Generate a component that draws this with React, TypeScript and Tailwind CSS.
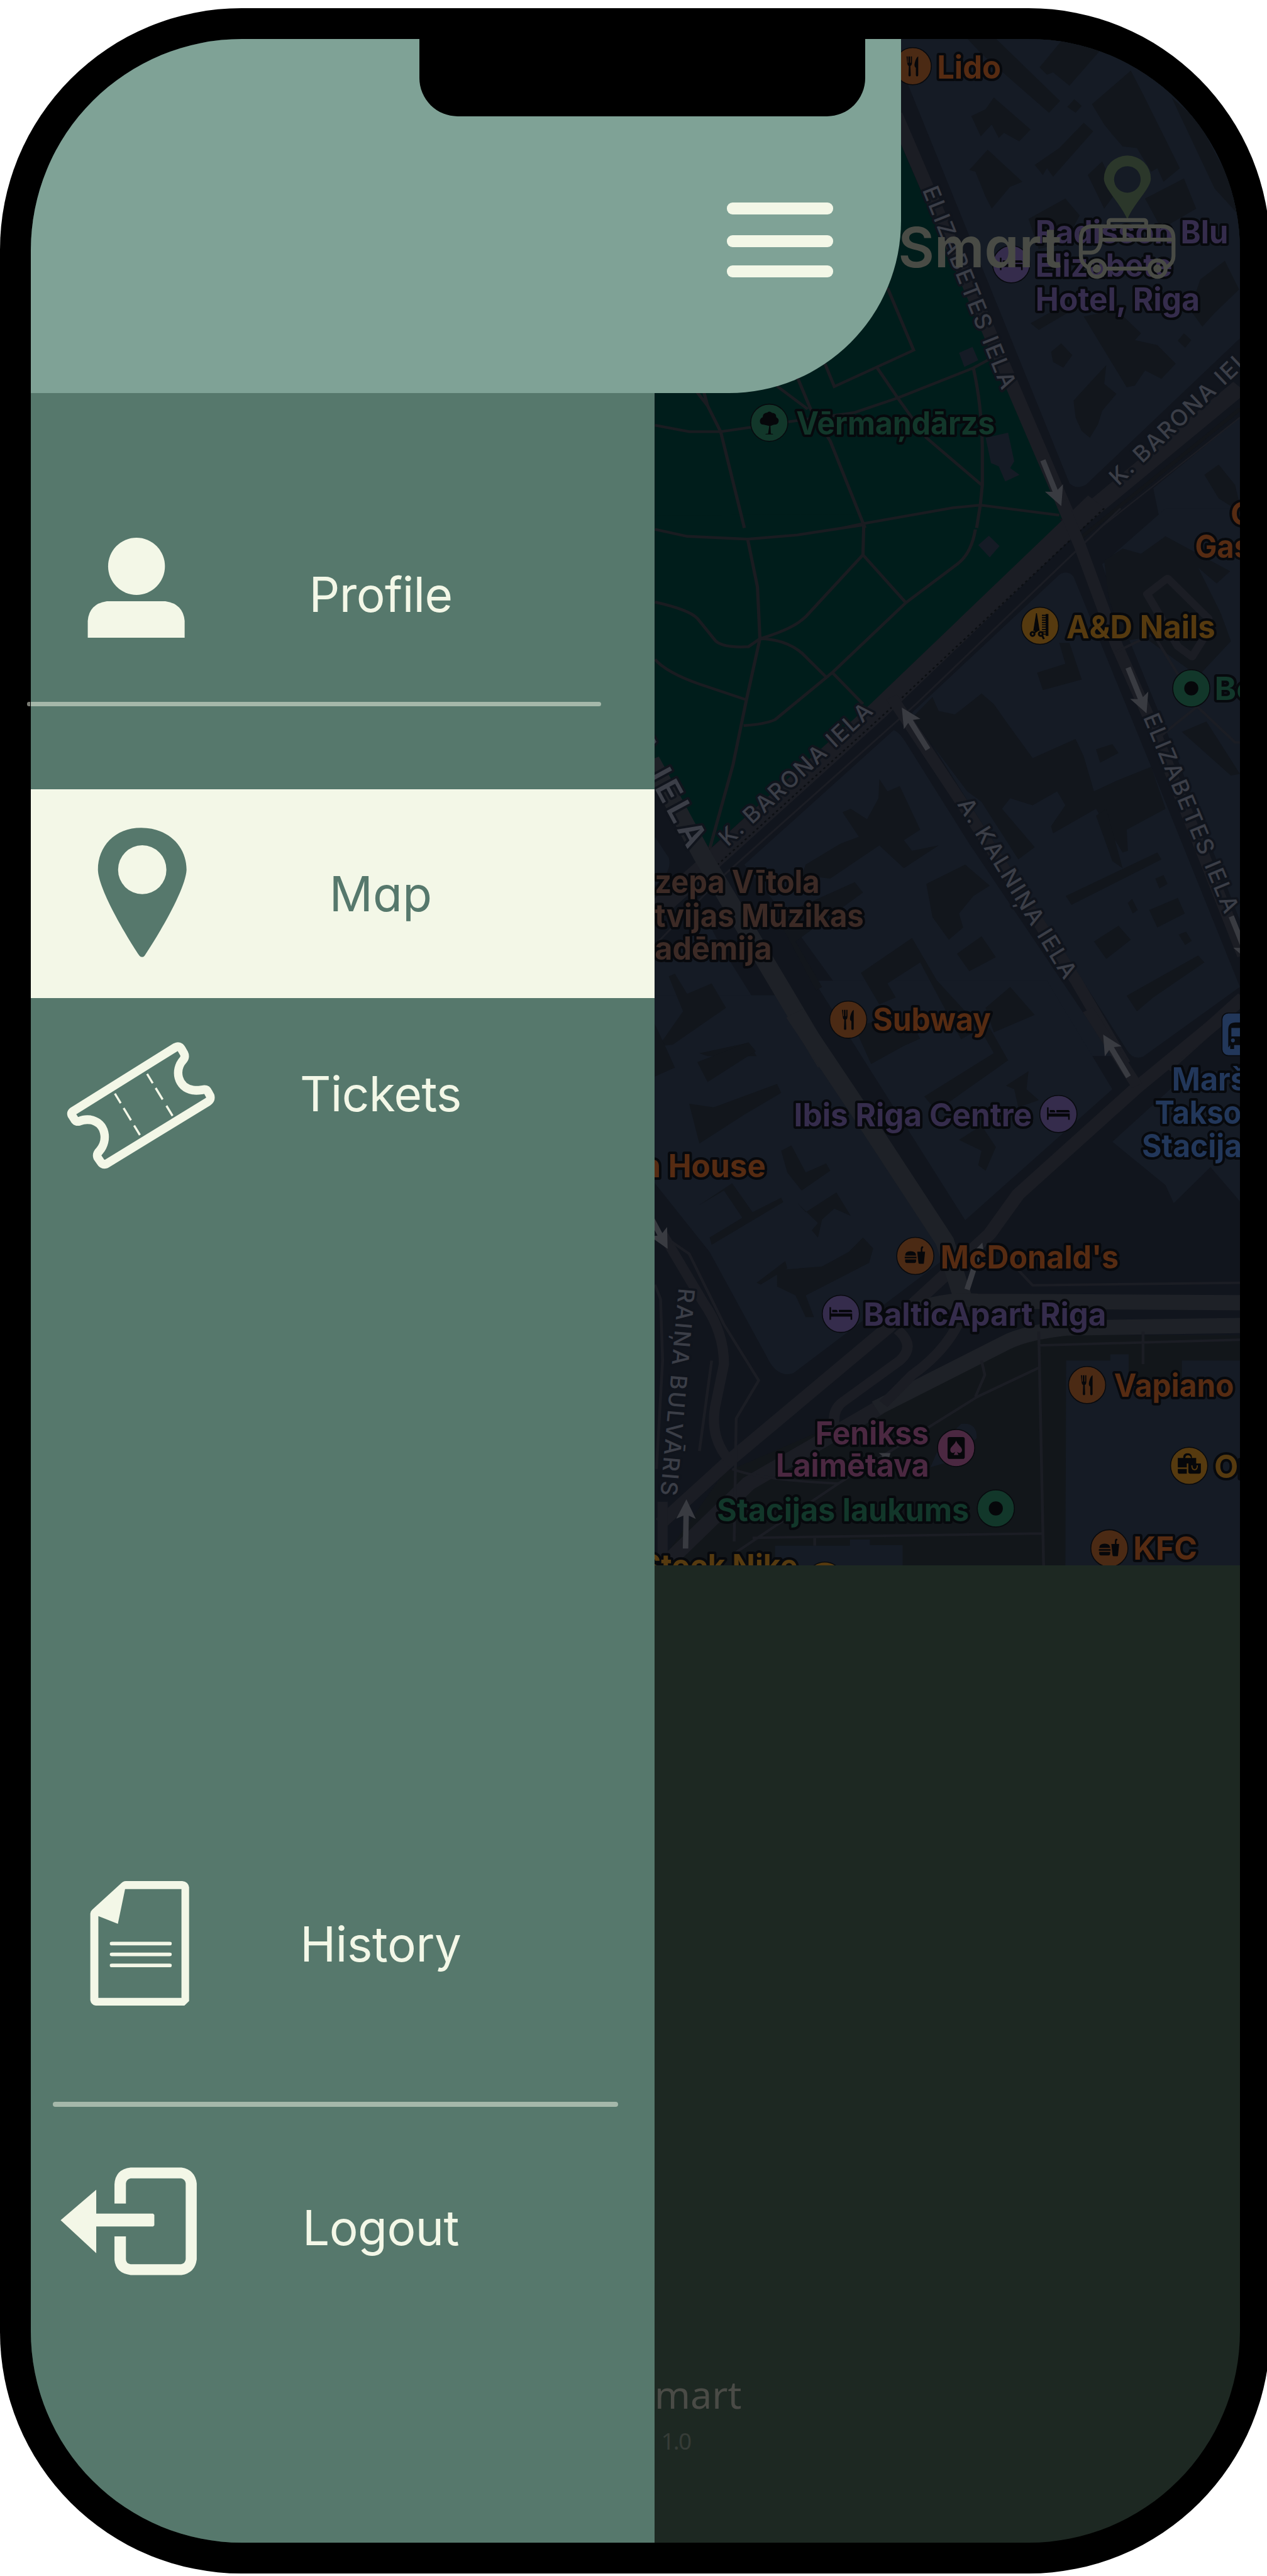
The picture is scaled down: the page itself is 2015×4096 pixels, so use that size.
import type { ReactNode } from 'react'

const ORANGE = '#4b2a14'
const ORANGE_TEXT = '#562b12'
const PURPLE = '#352c4c'
const GREEN = '#12372a'
const YELLOW = '#563a0f'
const PINK = '#4b2841'
const BLUE = '#22375a'
const BLOCK = '#151b25'
const BUILDING = '#12161c'
const ROAD = '#1b1d24'

const NORTH = 'translate(1600 0) scale(1.0459 .861)'
const MIDDLE = 'translate(1600 1300) scale(1.0459 .8929)'
const SOUTH = 'translate(1600 2600) scale(1.0459 .9247)'

type LabelProps = { x: number; y: number; w: number; fill: string; size?: number; children: string }

function Label({ x, y, w, fill, size = 81, children }: LabelProps) {
  return (
    <text
      x={x}
      y={y}
      textLength={w}
      lengthAdjust="spacingAndGlyphs"
      fontSize={size}
      fill={fill}
      className="font-[650] [paint-order:stroke]"
      stroke="#07090d"
      strokeWidth={13}
      strokeLinejoin="round"
    >
      {children}
    </text>
  )
}

type StreetProps = { x: number; y: number; angle: number; w: number; size?: number; bold?: boolean; children: string }

function Street({ x, y, angle, w, size = 58, bold, children }: StreetProps) {
  return (
    <text
      transform={`translate(${x} ${y}) rotate(${angle})`}
      textLength={w}
      fontSize={size}
      fill="#3b3e47"
      className={bold ? 'font-semibold [paint-order:stroke]' : 'font-medium [paint-order:stroke]'}
      stroke="#10141c"
      strokeWidth={12}
      strokeLinejoin="round"
    >
      {children}
    </text>
  )
}

function Poi({ x, y, fill, children }: { x: number; y: number; fill: string; children: ReactNode }) {
  return (
    <g transform={`translate(${x} ${y})`}>
      <circle r="47.5" fill={fill} stroke="#080a0e" strokeWidth="2.5" />
      {children}
    </g>
  )
}

const Fork = () => (
  <g fill="#06070a">
    <path d="M-16 -25h3v16h2v-16h4v16h2v-16h3v18q0 5-4 7l1 23q0 3-3 3t-3-3l1-23q-4-2-4-7z" />
    <path d="M14-25V23q0 3-3 3t-3-3V4Q3 2 5-8 8-22 14-25Z" />
  </g>
)

const Bed = () => (
  <path d="M-29-17h4V-1H29V15H25V7H-25V15H-29ZM-22-10h10q4 0 4 6h-14ZM-5-10H25q4 0 4 6H-5Z" fill="#06070a" />
)

const Burger = () => (
  <g fill="#06070a">
    <path d="M-26-1q0-11 14-11T2-1ZM-27 2H3v4H-27ZM-26 9H2v5q0 4-4 4h-20q-4 0-4-4Z" />
    <path d="M5-11h9v-8q0-5 4-6l3 2-3 5v7h7l-3 29q0 2-2 2H11q-3 0-3-3Z" />
  </g>
)

const Tree = () => (
  <path d="M-3 28 0 8-14 5q-10 0-10-9 0-7 7-10 0-11 12-12 6-5 12 1 11 0 11 11 7 4 6 10-1 9-12 9L3 8l1 20q6 0 6 2h-20q0-2 7-2Z" fill="#06070a" />
)

const Scissors = () => (
  <g fill="none" stroke="#06070a" strokeWidth="5">
    <path d="M-9-32-16 12-2 12Z" fill="#06070a" strokeWidth="2" />
    <circle cx="-19" cy="21" r="5" />
    <circle cx="2" cy="21" r="5" />
    <path d="M-14 17-4 10M6 26 10 34" />
    <path d="M18-30V26" strokeWidth="7" />
    <path d="M10-28v52" strokeWidth="10" strokeDasharray="3 3" />
  </g>
)

const Dot = () => <circle r="18" fill="#06070a" />

const Card = () => (
  <>
    <rect x="-22" y="-28" width="44" height="56" rx="5" fill="#06070a" />
    <path d="M0-19C3-8 16-3 15 6 14 14 5 14 2 9L6 18H-6L-2 9C-5 14-14 14-15 6-16-3-3-8 0-19Z" fill={PINK} />
  </>
)

const Bags = () => (
  <>
    <path d="M-29-20h14v-4q2-8 11-8t11 8v4H18v14H-6V4H-29ZM-10-20H5q-2-7-8-7-6 0-7 7ZM-29 8H-6V20H-26q-3 0-3-4Z" fill="#06070a" />
    <path d="M-2-6H30V16q0 4-4 4H2q-4 0-4-4Z" fill="#06070a" />
    <path d="M7-1q0 11 7 11t7-11" fill="none" stroke={YELLOW} strokeWidth="3" />
  </>
)

function Arrow({ x, y, angle, len = 126 }: { x: number; y: number; angle: number; len?: number }) {
  return (
    <path
      transform={`translate(${x} ${y}) rotate(${angle})`}
      d={`M0 0-50-25-42-7H${-len}V7H-42L-50 25Z`}
      fill="#393b41"
    />
  )
}

function Blocks() {
  return (
    <g fill={BLOCK}>
      <g transform={NORTH}>
        <path d="M673 110H1502V1005L1125 1440Q1100 1455 1085 1435L673 200Z" />
        <path d="M1502 1240V1568H1310L1290 1450Z" />
      </g>
      <g transform={MIDDLE}>
        <path d="M700 585 1060 190Q1080 175 1095 195L1285 740 1502 1370 1265 1570Q1240 1580 1225 1550L870 900Z" />
        <path d="M1320 0H1502V1180L1330 660 1215 330 1165 160Z" />
        <path d="M655 635Q670 640 690 680L840 960 1190 1568H640L400 1180 290 1020Z" />
        <path d="M71 1290 200 1180 230 1250 400 1568H71ZM71 940 105 1000Q115 1040 71 1080Z" />
      </g>
      <g transform={SOUTH}>
        <path d="M460-100 830 562 1190 200 1030-100Z" />
        <path d="M71-60H390L790 660 410 985Q370 1000 345 940L205 650 71 460Z" />
        <path d="M1190 345 1380 150H1502V510L1430 415 1340 515 1320 465Z" />
        <path d="M610 1080 1010 880H1502V1530H71L240 1260Z" fill="#12161a" />
        <path d="M1077 950H1185V933H1230V1000H1360V950H1502V1530H1075ZM365 1462H548V1445H597V1460H677V1530H365Z" />
        <path d="M745 1245 770 1180 820 1125Q860 1120 858 1165L790 1230Z" />
      </g>
    </g>
  )
}

function Buildings() {
  return (
    <g fill={BUILDING}>
      <g transform={NORTH}>
        <path d="M835 115H905L1062 300 1035 335 870 160ZM1012 200 1070 115H1150L1160 150 1085 255 1045 215 1030 222ZM1097 295 1115 315 1100 335 1080 318ZM845 345 880 325 900 290 990 385 962 420 925 395 912 410 895 370 868 405ZM885 445 970 540 940 555 895 620 880 585 855 510 840 505ZM1120 365 1143 390 1045 525 1030 500 1020 520 1000 490 1060 440Z" />
        <path d="M1140 310 1235 210 1265 280 1355 500 1315 540 1300 500 1285 510 1250 440 1215 435 1190 400 1170 370ZM1270 590 1365 530 1395 620 1310 680ZM1130 520 1165 480 1200 570 1170 620ZM985 650 1075 590 1110 640 1075 720 1010 740ZM1335 290 1400 360 1470 520 1500 640 1440 560Z" />
        <path d="M1120 940 1200 920 1260 990 1245 1010 1300 1025 1345 1080 1310 1125 1270 1100 1245 1145 1225 1150ZM990 960 1080 900 1100 915 1010 980ZM1040 1045 1065 1020 1092 1055 1070 1092 1045 1075ZM1095 1190 1140 1130 1175 1085 1170 1140 1200 1170 1165 1220 1155 1260 1135 1300 1115 1280 1100 1240ZM1405 830 1465 775 1500 860 1440 930 1410 970 1380 920ZM1365 990 1383 1010 1368 1033 1350 1012ZM1415 1410 1450 1380 1490 1440 1502 1500V1520L1450 1480Z" />
      </g>
      <g transform={MIDDLE}>
        <path d="M750 540 765 580 805 590 870 530 900 560 930 610 995 715 1100 660 1120 710 1145 810 1200 780 1285 740 1320 860 1225 920 1228 980 1215 985 1150 860 1045 930 1040 910 1075 850 1055 810 995 850 940 830 920 860 1000 970 960 1005 870 840 835 810 700 600Z" />
        <path d="M1006 470 1075 445 1060 385 1085 385 1115 490 1020 520ZM1076 1110 1300 985 1310 1005 1090 1135ZM1190 1010 1150 880 1175 860 1215 1030ZM1280 1150 1350 1115 1367 1160 1300 1200ZM1145 1240 1205 1195 1235 1235 1175 1290ZM1225 1395 1400 1280 1415 1300 1290 1400 1250 1440ZM1295 1060 1315 1050 1325 1075 1305 1088ZM1150 690 1190 675 1205 700 1160 728ZM1228 1130 1238 1118 1252 1150 1240 1160ZM1352 1220 1370 1212 1384 1238 1368 1250Z" />
        <path d="M1170 150 1215 115 1260 130 1320 80 1478 180 1445 215 1400 170 1455 300 1480 380 1400 480 1340 430 1270 370 1215 380 1180 250ZM1360 640 1420 610 1502 760 1480 765Z" />
        <path d="M530 870 550 860 590 890 618 830 620 775 640 810 670 795 720 920 680 950 700 980 765 965 680 1030 620 965 500 1060 430 1050 440 1020 525 960 570 940ZM735 1075 830 1020 890 1080 850 1110 815 1160 825 1200 790 1235 750 1170ZM575 1330 700 1230 760 1350 830 1440 850 1500 820 1520 720 1300 640 1360 660 1400 620 1420ZM810 1275 870 1225 905 1285 840 1325ZM880 1430 940 1370 1000 1450 900 1500ZM370 1170 560 1070 580 1100 415 1240 480 1370 465 1380Z" />
        <path d="M105 1340 120 1332 150 1390 210 1360 245 1430 115 1535 80 1540 140 1440ZM180 1560 300 1530 320 1568H200Z" />
      </g>
      <g transform={SOUTH}>
        <path d="M730 220 900 100 870 40 890 30 935 120 760 260ZM600 130 680 80 720 60 700 20 640 0 560 30ZM930 190 985 150 980 200 1010 230 960 250 950 200ZM815 340 870 300 905 360 880 425 862 410 870 370Z" />
        <path d="M175 125 300 70 318 95 200 180ZM155 240 215 250 370 185 380 210 290 270 180 350ZM71 20 100 90 120 140 71 165ZM380 370 405 355 440 430 490 405 500 425 430 480 395 430ZM180 520 260 460 310 540 380 500 385 512 210 630 205 610 285 555 240 480ZM420 515 440 540 515 485 550 550 510 530 480 560 470 610 455 590 470 570ZM370 700 480 690 545 650 580 610 605 640 595 680 440 770 460 830 440 830 415 770 370 745ZM320 735 390 675 395 695 330 740Z" />
      </g>
    </g>
  )
}

function Park() {
  return (
    <>
      <g fill="#001d1b">
        <path transform={NORTH} d="M71 400 673 430 1070 1540H71Z" />
        <path transform={MIDDLE} d="M71 20 1050 15 1068 40 600 560 205 975 71 720Z" />
      </g>
      <g fill={BLOCK}>
        <path
          transform={NORTH}
          d="M815 1048 848 1030 862 1070 828 1090ZM880 1300 935 1285 950 1370 940 1390 963 1410 928 1430 912 1385 893 1375Z"
        />
        <path transform={MIDDLE} d="M862 105 888 78 914 108 890 140Z" />
      </g>
      <g fill="none" stroke="#1a1c21" strokeWidth="8">
        <g transform={NORTH}>
          <path d="M640 855 704 1040 510 1148 487 1080M71 1263 155 1282H232L415 1250 560 1225 665 1182 850 1093 888 1068M420 1122 452 1215 500 1310 585 1568M370 1147 445 1215M175 1166 200 1205 232 1282 290 1568M190 1160 200 1205M615 1093 665 1182 735 1300 870 1440M850 1093Q870 1200 872 1330V1440L867 1500 858 1568M530 1568 580 1555 800 1508 867 1500 1060 1530" />
        </g>
        <g transform={MIDDLE}>
          <path d="M71 60 150 80 298 88 420 76 582 47M298 88 322 225 328 373 295 548 262 735 205 975M582 47 580 133 440 310Q410 345 328 373L300 396Q240 400 220 380L175 315Q155 290 71 268M580 133 685 270M855 60Q845 130 810 160L685 270 505 470 365 605Q340 618 288 622M328 373Q400 375 440 425L490 483M505 470 580 560M71 432Q100 470 180 503L295 548" />
        </g>
      </g>
    </>
  )
}

function Roads() {
  return (
    <g fill="none" stroke={ROAD} strokeLinejoin="round">
      <g transform={NORTH}>
        <path d="M660 340 1085 1540" strokeWidth="34" />
        <path d="M1502 1150 1085 1568" strokeWidth="46" />
        <path d="M1502 1215 1110 1600" strokeWidth="10" stroke="#12151a" />
        <path d="M1502 1240 1160 1568" strokeWidth="4" />
      </g>
      <g transform={MIDDLE}>
        <path d="M1150-20 620 575 200 1020 60 1165" strokeWidth="52" />
        <path d="M1170 0 650 570 215 1030" strokeWidth="4" stroke="#0c0f13" strokeDasharray="6 8" />
        <path d="M1210 0 710 560 240 1050 71 1250" strokeWidth="5" />
        <path d="M1065-20 1110 105 1200 390 1280 600 1510 1280" strokeWidth="30" />
        <path d="M650 540 820 840 1100 1350 1220 1590" strokeWidth="30" />
        <path d="M60 720 190 1000 490 1590" strokeWidth="46" stroke="#1e2127" />
        <path d="M1510 1400 1320 1600" strokeWidth="34" />
        <path d="M1275 245 1325 200 1425 315 1425 350 1385 425 1350 395Z" strokeWidth="20" />
        <path d="M1200 410 1290 360 1400 570 1490 670 1502 670M1400 565 1310 650" strokeWidth="7" />
      </g>
      <g transform={SOUTH}>
        <path d="M1460 0 1250 195 960 490 890 600 640 860 260 1220 85 1400" strokeWidth="34" />
        <path d="M90 1520 300 1290 620 1080" strokeWidth="40" />
        <path d="M1130-20 1250 190" strokeWidth="28" />
        <path d="M412-10 560 240 780 620 825 780" strokeWidth="46" stroke="#1e2127" />
        <path d="M720 805Q790 780 860 786L1510 790M612 1082 930 900Q980 872 1080 860L1510 853" strokeWidth="42" stroke="#1e2127" />
        <path d="M665 865Q710 910 670 950L530 1065Q505 1085 510 1130M830 800Q800 910 700 990L630 1070" strokeWidth="26" />
        <path d="M90 600 190 790Q240 870 240 960L218 1080Q205 1170 260 1235M90 1340V1500" strokeWidth="25" />
        <path d="M71 740 85 780 90 950 75 1250M110 620 155 655 240 850 325 1005 270 1110 265 1450M210 950 180 1200M1010 870 1022 1530M1010 908 1510 892M1265 870V960M960 700 995 742 1510 735M1010 970 860 1050 520 1290 270 1480M310 1440 1020 1428M260 1250Q330 1280 520 1290M870 950 878 990 855 1050M462 1440V1462" strokeWidth="7" />
      </g>
    </g>
  )
}

function Brand() {
  return (
    <g>
      <text
        x="2297"
        y="683"
        textLength="418"
        lengthAdjust="spacingAndGlyphs"
        fontSize="142"
        fill="#494b45"
        className="font-semibold [font-feature-settings:'cv11']"
      >
        Smart
      </text>
      <path
        d="M2883 561C2865 520 2823 482 2823 457A60 59 0 0 1 2943 457C2943 482 2900 520 2883 561ZM2883 425A34 34 0 1 0 2883 493A34 34 0 1 0 2883 425Z"
        fill="#2b372a"
        fillRule="evenodd"
      />
      <g fill="none" stroke="#494b45" strokeWidth="10">
        <path d="M2782 684Q2764 672 2764 655V611Q2764 579 2794 579H2971Q3001 579 3001 611V655Q3001 672 2983 684M2830 687H2935" />
        <path d="M2835 576V567Q2836 563 2841 563H2925Q2930 563 2931 567V576M2817 613H3000M2876 579V613M2938 579V613M2815 579V612Q2813 645 2790 646H2766" />
        <circle cx="2805" cy="687" r="21" />
        <circle cx="2960" cy="687" r="21" />
      </g>
      <circle cx="2805" cy="687" r="10.500" fill="#494b45" />
      <circle cx="2960" cy="687" r="10.500" fill="#494b45" />
    </g>
  )
}

function CityMap() {
  return (
    <svg viewBox="78 100 3093 3902" className="block h-[2427px] w-full shrink-0 font-['Inter',sans-serif]" preserveAspectRatio="none">
      <rect x="78" y="100" width="3093" height="3902" fill="#11151d" />
      <Blocks />
      <Buildings />
      <Park />
      <Roads />

      <Arrow x={2714} y={1294} angle={68} />
      <Arrow x={2306} y={1809} angle={238} />
      <Arrow x={2932} y={1824} angle={68} />
      <Arrow x={2821} y={2645} angle={239} />
      <Arrow x={2512} y={3177} angle={-72} />
      <Arrow x={1707} y={3193} angle={62} />
      <Arrow x={1755} y={3833} angle={-89} />
      <Arrow x={3196} y={2460} angle={68} />
      <path d="M2247 3715H2277L2272 3732 2262 3726 2247 3740 2256 3722Z" fill="#393b41" />

      <Street x={2358} y={486} angle={68.300} w={552}>ELIZABETES IELA</Street>
      <Street x={2860} y={1244} angle={-43.500} w={508}>K. BARONA IELA</Street>
      <Street x={1861} y={2166} angle={-42.600} w={508}>K. BARONA IELA</Street>
      <Street x={1607} y={1893} angle={61.500} w={318} size={84} bold>A IELA</Street>
      <Street x={2447} y={2056} angle={58.700} w={528}>A. KALNIŅA IELA</Street>
      <Street x={2923} y={1834} angle={67.500} w={546}>ELIZABETES IELA</Street>
      <Street x={1735} y={3292} angle={95} w={532}>RAIŅA BULVĀRIS</Street>

      <Poi x={2334} y={169.500} fill={ORANGE}><Fork /></Poi>
      <Poi x={1967} y={1081} fill={GREEN}><Tree /></Poi>
      <Poi x={2586} y={676} fill={PURPLE}><Bed /></Poi>
      <Poi x={2659.500} y={1600} fill={YELLOW}><Scissors /></Poi>
      <Poi x={3046.500} y={1760} fill={GREEN}><Dot /></Poi>
      <Poi x={2169} y={2607} fill={ORANGE}><Fork /></Poi>
      <Poi x={2706.500} y={2848} fill={PURPLE}><Bed /></Poi>
      <Poi x={2340.500} y={3211} fill={ORANGE}><Burger /></Poi>
      <Poi x={2150} y={3359} fill={PURPLE}><Bed /></Poi>
      <Poi x={2780} y={3541} fill={ORANGE}><Fork /></Poi>
      <Poi x={2445} y={3702} fill={PINK}><Card /></Poi>
      <Poi x={2546.500} y={3856.500} fill={GREEN}><Dot /></Poi>
      <Poi x={3041} y={3747.500} fill={YELLOW}><Bags /></Poi>
      <Poi x={2837} y={3958.500} fill={ORANGE}><Burger /></Poi>
      <Poi x={2109} y={4041} fill={YELLOW}><Bags /></Poi>
      <g>
        <rect x="3125" y="2590" width="108" height="109" rx="16" fill={BLUE} stroke="#080a0e" strokeWidth="2.500" />
        <path d="M3141 2678V2632Q3141 2614 3160 2614H3200V2672H3156V2682H3146V2672ZM3149 2628V2650H3200V2628ZM3148 2660a5 5 0 1 0 10 0a5 5 0 1 0-10 0Z" fill="#080a0e" fillRule="evenodd" />
      </g>

      <Label x={2396} y={202} w={164} fill={ORANGE_TEXT}>Lido</Label>
      <Label x={2648} y={622} w={493} fill={PURPLE}>Radisson Blu</Label>
      <Label x={2648} y={708} w={350} fill={PURPLE}>Elizabete</Label>
      <Label x={2648} y={794} w={420} fill={PURPLE}>Hotel, Riga</Label>
      <Label x={2036} y={1112} w={508} fill={GREEN}>Vērmaņdārzs</Label>
      <Label x={3147} y={1342} w={60} fill={ORANGE_TEXT}>C</Label>
      <Label x={3056} y={1427} w={142} fill={ORANGE_TEXT}>Gas</Label>
      <Label x={2727} y={1633} w={381} fill={YELLOW}>A&D Nails</Label>
      <Label x={3106} y={1789} w={106} fill={GREEN}>Be</Label>
      <Label x={1674} y={2284} w={422} fill="#3c2a25">zepa Vītola</Label>
      <Label x={1674} y={2370} w={535} fill="#3c2a25">tvijas Mūzikas</Label>
      <Label x={1674} y={2454.500} w={300} fill="#3c2a25">adēmija</Label>
      <Label x={2232} y={2635} w={302} fill={ORANGE_TEXT}>Subway</Label>
      <Label x={2997} y={2788} w={193} fill={BLUE}>Marš</Label>
      <Label x={2953} y={2873} w={222} fill={BLUE}>Takso</Label>
      <Label x={2920} y={2958} w={256} fill={BLUE}>Stacija</Label>
      <Label x={2030} y={2880} w={609} fill={PURPLE}>Ibis Riga Centre</Label>
      <Label x={1640} y={3009.500} w={318} fill={ORANGE_TEXT}>n House</Label>
      <Label x={2405} y={3242.500} w={456} fill={ORANGE_TEXT}>McDonald's</Label>
      <Label x={2208} y={3389} w={621} fill={PURPLE}>BalticApart Riga</Label>
      <Label x={2849} y={3571} w={307} fill={ORANGE_TEXT}>Vapiano</Label>
      <Label x={2085} y={3693} w={290} fill={PINK}>Fenikss</Label>
      <Label x={1984} y={3776} w={392} fill={PINK}>Laimētava</Label>
      <Label x={3105} y={3779} w={94} fill={YELLOW}>Or</Label>
      <Label x={1833} y={3890} w={645} fill={GREEN}>Stacijas laukums</Label>
      <Label x={2898} y={3987} w={164} fill={ORANGE_TEXT}>KFC</Label>
      <Label x={1640} y={4032} w={400} fill={YELLOW}>Stock Nike</Label>

      <Brand />
    </svg>
  )
}

function IconBox({ y, scaleY, children }: { y: number; scaleY: number; children: ReactNode }) {
  return (
    <svg viewBox="0 0 300 220" className="h-[220px] w-[300px] shrink-0 overflow-visible" fill="currentColor">
      <g transform={`translate(-60 ${y}) scale(.67428 ${scaleY})`}>{children}</g>
    </svg>
  )
}

const ProfileIcon = () => (
  <IconBox y={-27.2} scaleY={0.6942}>
    <ellipse cx="322" cy="132" rx="67" ry="65.500" />
    <path d="M207 295.500V257Q210 218 252 212H390Q432 218 435.500 257V295.500Z" />
  </IconBox>
)

const PinIcon = () => (
  <IconBox y={-502.9} scaleY={0.6942}>
    <path
      fillRule="evenodd"
      d="M335.500 1028Q331 1028 329 1025C290 968 232 870 231 828 231 775 270 732 333 732 398 732 440 775 440 828 438 870 382 965 341 1025Q339 1028 335.500 1028ZM335.500 772A57 56 0 1 0 335.500 884A57 56 0 1 0 335.500 772Z"
    />
  </IconBox>
)

const TicketIcon = () => (
  <IconBox y={-821.4} scaleY={0.6942}>
    <g fill="none" stroke="currentColor" strokeLinejoin="round">
      <path
        strokeWidth="20"
        d="M173 1380 414 1234Q423 1230 428 1238L434 1248Q438 1256 432 1263C411 1286 418 1326 455 1332 465 1334 472 1332 480 1331Q488 1330 491 1337L496 1346Q498 1354 490 1359L251 1501Q242 1504 237 1496L230 1486Q227 1479 235 1471C255 1448 251 1407 213 1400 203 1399 195 1400 188 1403Q179 1406 175 1398L169 1389Q167 1384 173 1380Z"
      />
      <path strokeWidth="5" strokeDasharray="26 13 33 14 27" d="M271 1340 330 1435" />
      <path strokeWidth="5" strokeDasharray="25 13 31 17 30" d="M347 1295 407 1391" />
    </g>
  </IconBox>
)

const DocumentIcon = () => (
  <IconBox y={-57.6} scaleY={0.476}>
    <path
      fillRule="evenodd"
      d="M213 250Q213 243 218 237L283 153Q290 142 297 142H430Q444 144 446 163V543L435 558H226Q215 556 213 540ZM232 259V532H428V169H295L278 285Z"
    />
    <rect x="259" y="345" width="146" height="12" rx="5" />
    <rect x="259" y="381" width="146" height="12" rx="5" />
    <rect x="259" y="418" width="146" height="12" rx="5" />
  </IconBox>
)

const LogoutIcon = () => (
  <IconBox y={-508.6} scaleY={0.476}>
    <path d="M270 1219V1155Q272 1105 308 1099H428Q460 1106 464 1152V1406Q460 1451 428 1458H308Q273 1452 270 1408V1329H297V1405Q297 1419 308 1422H427Q437 1419 438 1405V1152Q437 1138 427 1135H308Q298 1138 297 1152V1219Z" />
    <path d="M143 1275 227 1173V1253H361L364 1257V1292L361 1296H227V1385Z" />
  </IconBox>
)

type MenuItemProps = { icon: ReactNode; label: string; className: string }

function MenuItem({ icon, label, className }: MenuItemProps) {
  return (
    <a className={`flex shrink-0 items-center pl-[11.5px] ${className}`}>
      {icon}
      <span className="w-[491px] text-center text-[76.5px] leading-none">{label}</span>
    </a>
  )
}

export default function App() {
  return (
    <div className="h-[4096px] w-[2015px] overflow-hidden bg-white pt-[13.3px]">
      <div className="relative h-[4078.5px] w-[2020px] rounded-[384px] bg-black p-[48.5px]">
        <div className="relative flex h-full w-full flex-col overflow-hidden rounded-[336px] bg-[#1d2822]">
          <CityMap />
          <footer className="flex flex-1 flex-col pt-[1287px] font-['Noto_Sans',sans-serif] leading-none text-[#4a4b46]">
            <p className="pl-[959px] text-[61px] leading-none">Smart</p>
            <p className="mt-[25px] pl-[1003px] text-[37px] leading-none tracking-[-0.05em] text-[#363c37]">1.0</p>
          </footer>

          <aside className="absolute inset-0 flex flex-col text-[#f3f7e7]">
            <header className="relative z-10 flex h-[563px] w-[1384.3px] shrink-0 items-start justify-end rounded-br-[274px] bg-[#7fa296] pt-[260.4px] pr-[108px]">
              <button className="flex w-[168.4px] flex-col">
                <span className="h-[19px] w-full rounded-[9px] bg-[#f3f7e7]" />
                <span className="mt-[32.4px] h-[19px] w-full rounded-[9px] bg-[#f3f7e7]" />
                <span className="mt-[29.8px] h-[19px] w-full rounded-[9px] bg-[#f3f7e7]" />
              </button>
            </header>
            <nav className="flex w-[992.5px] flex-1 flex-col bg-[#56786c] font-['Inter',sans-serif] font-normal [font-feature-settings:'cv11']">
              <MenuItem icon={<ProfileIcon />} label="Profile" className="mt-[210.8px] h-[220px] tracking-[-0.036em]" />
              <div className="mt-[60px] h-[7px] w-[907px] shrink-0 rounded-r-[4px] bg-[#f3f7e7]/50" />
              <MenuItem icon={<PinIcon />} label="Map" className="mt-[132.6px] h-[332px] bg-[#f3f7e7] tracking-[0.015em] text-[#56786c]" />
              <MenuItem icon={<TicketIcon />} label="Tickets" className="h-[305px] tracking-[-0.039em]" />
              <MenuItem icon={<DocumentIcon />} label="History" className="mt-[1088.6px] h-[220px] tracking-[-0.022em]" />
              <div className="mt-[141.6px] ml-[35.8px] h-[8px] w-[899px] shrink-0 rounded-[4px] bg-[#f3f7e7]/50" />
              <MenuItem icon={<LogoutIcon />} label="Logout" className="mt-[81.4px] h-[220px] tracking-[-0.033em]" />
            </nav>
          </aside>
        </div>
        <div className="absolute top-[48px] left-[666.8px] z-20 h-[123.7px] w-[709px] rounded-b-[61px] bg-black" />
        <div className="absolute top-[1102.7px] left-[43.2px] z-20 h-[7px] w-[5.3px] rounded-l-[3px] bg-[#f3f7e7]/50" />
      </div>
    </div>
  )
}
